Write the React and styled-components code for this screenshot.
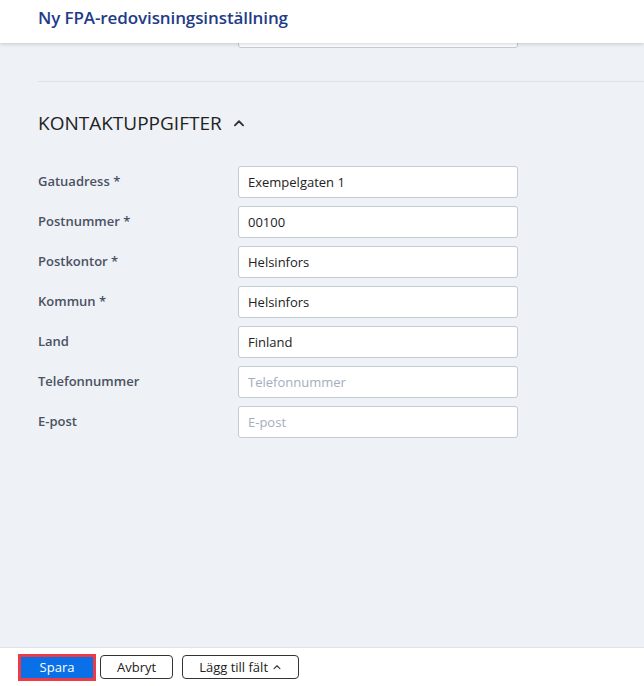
import React from "react";
import styled, { createGlobalStyle } from "styled-components";

const Global = createGlobalStyle`
  html, body { margin: 0; padding: 0; height: 100%; }
  body { background: #eef1f6; font-family: "Open Sans", "Noto Sans", sans-serif; color: #222; }
  #root { height: 100%; }
`;

const Page = styled.div`
  position: relative;
  height: 686px;
  display: flex;
  flex-direction: column;
  overflow: hidden;
`;

const Header = styled.header`
  position: absolute;
  top: 0;
  left: 0;
  right: 0;
  height: 43px;
  box-sizing: border-box;
  background: #fff;
  box-shadow: 0 1px 4px rgba(0, 0, 0, 0.18);
  display: flex;
  align-items: flex-start;
  padding: 6px 0 0 38px;
  z-index: 2;
`;

const Title = styled.h1`
  margin: 0;
  font-size: 17px;
  line-height: 24px;
  font-weight: 600;
  color: #1f3c88;
  letter-spacing: -0.1px;
`;

const Content = styled.main`
  flex: 1;
  padding: 16px 0 0 38px;
  display: flex;
  flex-direction: column;
`;

const Divider = styled.hr`
  margin: 33px 0 0 0;
  border: 0;
  border-top: 1px solid #dde2ea;
`;

const SectionHead = styled.div`
  display: flex;
  align-items: center;
  gap: 10px;
  margin-top: 27px;
  height: 28px;
`;

const SectionTitle = styled.h2`
  margin: 0;
  font-size: 19px;
  font-weight: 400;
  color: #222;
`;

const Fields = styled.div`
  margin-top: 29px;
  display: flex;
  flex-direction: column;
  gap: 8px;
`;

const Row = styled.div`
  display: flex;
  align-items: center;
`;

const Label = styled.label`
  width: 200px;
  font-size: 13px;
  font-weight: 600;
  color: #4a5262;
  margin-top: -2px;
`;

const Input = styled.input`
  box-sizing: border-box;
  width: 280px;
  height: 32px;
  border: 1px solid #c3cbd8;
  border-radius: 3px;
  background: #fff;
  padding: 0 9px;
  font-family: inherit;
  font-size: 13px;
  color: #222;
  outline: none;
  &::placeholder { color: #a3aebd; }
`;

const Footer = styled.footer`
  height: 39px;
  box-sizing: border-box;
  border-top: 1px solid #dde2ea;
  background: #fff;
  display: flex;
  align-items: center;
  padding-left: 18px;
  gap: 4px;
`;

const Button = styled.button`
  box-sizing: border-box;
  height: 24px;
  padding: 0 16px;
  font-family: inherit;
  font-size: 13px;
  border-radius: 4px;
  border: 1px solid #333;
  background: #fff;
  color: #222;
  display: inline-flex;
  align-items: center;
  gap: 4px;
  margin-right: ${(p) => p.$gap || 0}px;
`;

const PrimaryButton = styled.button`
  box-sizing: border-box;
  height: 27px;
  width: 78px;
  font-family: inherit;
  font-size: 13px;
  border: 3px solid #ec3b46;
  background: #0a70e8;
  color: #fff;
  padding: 0;
`;

const Chevron = ({ size = 12, stroke = 1.6 }) => (
  <svg width={size} height={size} viewBox="0 0 12 12" fill="none">
    <path d="M2.5 8 L6 4.5 L9.5 8" stroke="#333" strokeWidth={stroke} strokeLinecap="round" strokeLinejoin="round" />
  </svg>
);

const fields = [
  { label: "Gatuadress *", value: "Exempelgaten 1" },
  { label: "Postnummer *", value: "00100" },
  { label: "Postkontor *", value: "Helsinfors" },
  { label: "Kommun *", value: "Helsinfors" },
  { label: "Land", value: "Finland" },
  { label: "Telefonnummer", placeholder: "Telefonnummer" },
  { label: "E-post", placeholder: "E-post" },
];

export default function App() {
  return (
    <>
      <Global />
      <Page>
        <Header>
          <Title>Ny FPA-redovisningsinställning</Title>
        </Header>
        <Content>
          <Row>
            <Label as="span" />
            <Input readOnly />
          </Row>
          <Divider />
          <SectionHead>
            <SectionTitle>KONTAKTUPPGIFTER</SectionTitle>
            <Chevron size={14} />
          </SectionHead>
          <Fields>
            {fields.map((f) => (
              <Row key={f.label}>
                <Label>{f.label}</Label>
                <Input defaultValue={f.value} placeholder={f.placeholder} />
              </Row>
            ))}
          </Fields>
        </Content>
        <Footer>
          <PrimaryButton>Spara</PrimaryButton>
          <Button $gap={5}>Avbryt</Button>
          <Button>
            Lägg till fält <Chevron size={10} stroke={1.3} />
          </Button>
        </Footer>
      </Page>
    </>
  );
}
